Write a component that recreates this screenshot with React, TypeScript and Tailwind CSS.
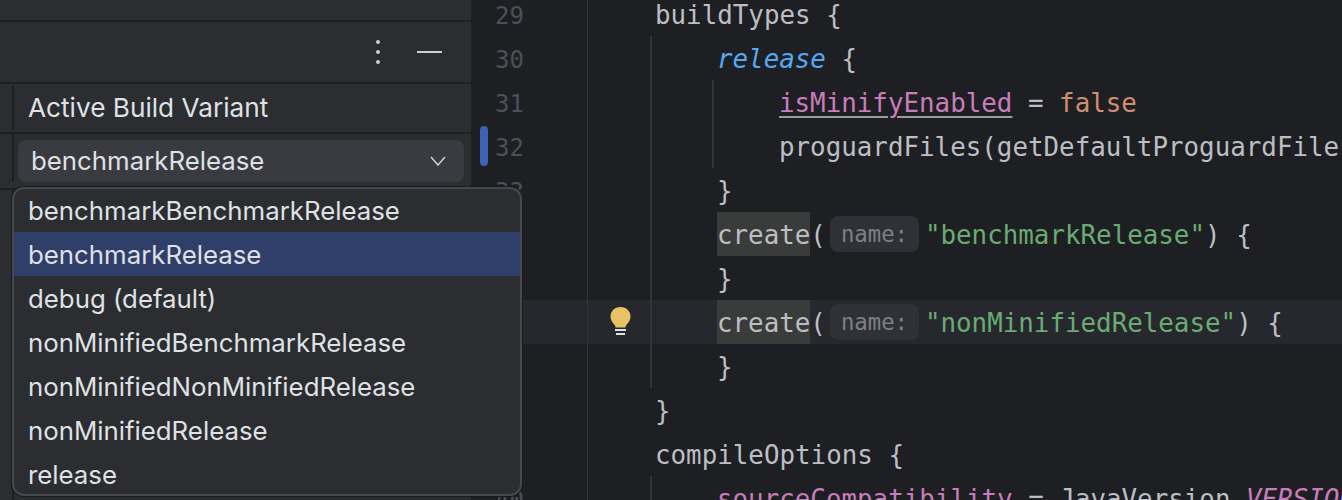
import React from 'react';

const mono = "font-['DejaVu_Sans_Mono',monospace]";

const variants = [
    'benchmarkBenchmarkRelease',
    'benchmarkRelease',
    'debug (default)',
    'nonMinifiedBenchmarkRelease',
    'nonMinifiedNonMinifiedRelease',
    'nonMinifiedRelease',
    'release',
];

const lineNumbers = [29, 30, 31, 32, 33, 34, 35, 36, 37, 38, 39, 40];

const Hint: React.FC = () => (
    <span className="self-center flex items-center w-[89px] h-[36px] ml-[4px] mr-[6px] pl-[11px] rounded-[8px] bg-[#2f3136] text-[#7d8087] text-[22.3px] leading-[34px]">name:</span>
);

const CreateLine: React.FC<{ name: string; active?: boolean }> = ({ name, active }) => (
    <div className={`h-[44px] pl-[129px] flex ${active ? 'bg-[#26282e]' : ''}`}>
        <span className="h-[44px] bg-[#3a3c3b]">create</span>(
        <Hint />
        <span className="text-[#6aab73]">"{name}"</span>) {'{'}
    </div>
);

const App: React.FC = () => {
    return (
        <div className="relative flex w-[1342px] h-[500px] overflow-hidden bg-[#1e1f22] text-[25.8px] font-['Inter',sans-serif]">
            {/* Left tool window */}
            <aside className="w-[471px] h-full shrink-0 flex flex-col bg-[#2b2d30]">
                <div className="h-[22px] shrink-0 border-b-2 border-[#1e1f22]" />
                <div className="h-[62px] shrink-0 flex items-center justify-end pr-[29px] gap-[36px] border-b-2 border-[#1e1f22]">
                    <svg width="6" height="26" viewBox="0 0 6 26" className="text-[#ced0d6]">
                        <circle cx="3" cy="3" r="2" fill="currentColor" />
                        <circle cx="3" cy="13" r="2" fill="currentColor" />
                        <circle cx="3" cy="23" r="2" fill="currentColor" />
                    </svg>
                    <div className="w-[25px] h-[2px] bg-[#ced0d6]" />
                </div>
                <div className="h-[50px] shrink-0 flex items-center pl-[12px] border-b-2 border-[#1e1f22]">
                    <div className="w-[2px] h-[44px] bg-[#1e1f22]" />
                    <span className="ml-[14px] text-[26.2px] text-[#dfe1e5]">Active Build Variant</span>
                </div>
                <div className="h-[56px] shrink-0 flex pl-[12px] pt-[6px] border-b-2 border-[#1e1f22]">
                    <div className="w-[2px] h-[48px] -mt-[6px] mb-[6px] bg-[#1e1f22]" />
                    <div className="ml-[4px] w-[446px] h-[42px] flex items-center justify-between pl-[13px] pr-[18px] rounded-[8px] bg-[#393b40] text-[#dfe1e5]">
                        <span>benchmarkRelease</span>
                        <svg width="16" height="10" viewBox="0 0 16 10" fill="none" stroke="#ced0d6" strokeWidth="1.5">
                            <path d="M1 1l7 8 7-8" />
                        </svg>
                    </div>
                </div>
                <div className="flex-1 pl-[12px]">
                    <div className="w-[2px] h-full bg-[#1e1f22]" />
                </div>
            </aside>

            {/* Gutter */}
            <div className="w-[117px] shrink-0 border-r border-[#313438]">
                <div className={`${mono} -mt-[8px] pl-[24px] text-[#4b5059] text-[24px] leading-[48px]`}>
                    {lineNumbers.map((n) => (
                        <div key={n} className="h-[44px]">{n}</div>
                    ))}
                </div>
            </div>

            {/* Code */}
            <div className={`${mono} flex-1 min-w-0 -mt-[8px] whitespace-pre text-[#bcbec4] text-[25.85px] leading-[46px]`}>
                <div className="h-[44px] pl-[67px]">buildTypes {'{'}</div>
                <div className="h-[44px] pl-[129px]"><span className="italic text-[#56a8f5]">release</span> {'{'}</div>
                <div className="h-[44px] pl-[191px]"><span className="text-[#c77dbb] underline decoration-[#9a9ca2] underline-offset-[4px]">isMinifyEnabled</span> = <span className="text-[#cf8e6d]">false</span></div>
                <div className="h-[44px] pl-[191px]">proguardFiles(getDefaultProguardFile</div>
                <div className="h-[44px] pl-[129px]">{'}'}</div>
                <CreateLine name="benchmarkRelease" />
                <div className="h-[44px] pl-[129px]">{'}'}</div>
                <CreateLine name="nonMinifiedRelease" active />
                <div className="h-[44px] pl-[129px]">{'}'}</div>
                <div className="h-[44px] pl-[67px]">{'}'}</div>
                <div className="h-[44px] pl-[67px]">compileOptions {'{'}</div>
                <div className="h-[44px] pl-[129px]"><span className="text-[#c77dbb]">sourceCompatibility</span> = JavaVersion.<span className="italic text-[#c77dbb]">VERSION</span></div>
            </div>

            {/* Change marker */}
            <div className="absolute left-[480px] top-[126px] w-[8px] h-[40px] rounded-[4px] bg-[#3d62b3]" />

            {/* Caret row gutter highlight + bulb */}
            <div className="absolute left-[522px] top-[300px] w-[65px] h-[44px] bg-[#26282e]" />
            <svg className="absolute left-[609px] top-[306px]" width="23" height="32" viewBox="0 0 23 32">
                <path d="M11.500 1C5.700 1 1.500 5.200 1.500 10.500c0 3.800 2.200 6.200 3.700 8 .9 1.100 1.300 2 1.300 3h10c0-1 .4-1.900 1.300-3 1.500-1.800 3.700-4.200 3.700-8C21.500 5.200 17.300 1 11.500 1z" fill="#e8c266" />
                <rect x="6" y="23" width="11" height="2" fill="#dfe1e5" />
                <rect x="7" y="27" width="9" height="2" fill="#dfe1e5" />
            </svg>

            {/* Indent guides */}
            <div className="absolute left-[650px] top-[36px] w-[2px] h-[352px] bg-[#313438]" />
            <div className="absolute left-[650px] top-[476px] w-[2px] h-[24px] bg-[#313438]" />
            <div className="absolute left-[712px] top-[80px] w-[2px] h-[88px] bg-[#313438]" />

            {/* Dropdown popup */}
            <div className="absolute left-[12px] top-[187px] w-[510px] h-[309px] flex flex-col rounded-[12px] border-2 border-[#46484d] shadow-[0_0_0_1px_#18191b] bg-[#2b2d30] overflow-hidden text-[#dfe1e5]">
                <div className="-mt-[1px]">
                    {variants.map((v) => (
                        <div
                            key={v}
                            className={`h-[44px] flex items-center pl-[14px] pt-[2px] ${v === 'benchmarkRelease' ? 'bg-[#2f3f69]' : ''}`}
                        >
                            {v}
                        </div>
                    ))}
                </div>
            </div>
        </div>
    );
};

export default App;
